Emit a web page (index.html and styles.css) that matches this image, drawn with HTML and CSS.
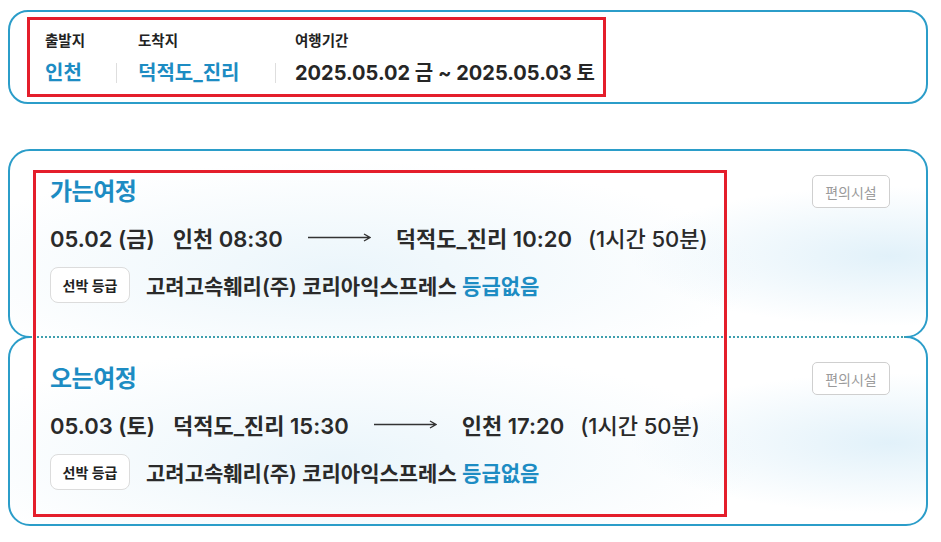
FILE: index.html
```html
<!DOCTYPE html>
<html lang="ko">
<head>
<meta charset="utf-8">
<title>여정 정보</title>
<link rel="stylesheet" href="styles.css">
</head>
<body>
<div class="page">
  <section class="route-card">
    <div class="route">
      <div class="field f1">
        <span class="label">출발지</span>
        <span class="value blue">인천</span>
      </div>
      <span class="sep"></span>
      <div class="field f2">
        <span class="label">도착지</span>
        <span class="value blue">덕적도_진리</span>
      </div>
      <span class="sep"></span>
      <div class="field f3">
        <span class="label">여행기간</span>
        <span class="value">2025.05.02 금 ~ 2025.05.03 토</span>
      </div>
    </div>
  </section>

  <div class="tickets">
    <section class="ticket first">
      <div class="ticket-head">
        <h2 class="title">가는여정</h2>
        <button class="facility">편의시설</button>
      </div>
      <div class="sched">
        <span class="date">05.02 (금)</span>
        <span class="dep">인천 08:30</span>
        <svg class="arrow" width="63" height="10" viewBox="0 0 63 10"><path d="M0 5.5H62M56 2L62 5.5L56 9" fill="none" stroke="#333" stroke-width="1.4"/></svg>
        <span class="arr">덕적도_진리 10:20</span>
        <span class="dur">(1시간 50분)</span>
      </div>
      <div class="ship">
        <span class="badge">선박 등급</span>
        <span class="company">고려고속훼리(주) 코리아익스프레스 <em>등급없음</em></span>
      </div>
    </section>
    <section class="ticket second">
      <div class="ticket-head">
        <h2 class="title">오는여정</h2>
        <button class="facility">편의시설</button>
      </div>
      <div class="sched">
        <span class="date">05.03 (토)</span>
        <span class="dep">덕적도_진리 15:30</span>
        <svg class="arrow" width="63" height="10" viewBox="0 0 63 10"><path d="M0 5.5H62M56 2L62 5.5L56 9" fill="none" stroke="#333" stroke-width="1.4"/></svg>
        <span class="arr">인천 17:20</span>
        <span class="dur">(1시간 50분)</span>
      </div>
      <div class="ship">
        <span class="badge">선박 등급</span>
        <span class="company">고려고속훼리(주) 코리아익스프레스 <em>등급없음</em></span>
      </div>
    </section>
  </div>

  <div class="mark mark-top"></div>
  <div class="mark mark-bottom"></div>
</div>
</body>
</html>
```

FILE: styles.css
```css
* { box-sizing: border-box; }
html, body { margin: 0; padding: 0; background: #fff; }
body {
  font-family: Inter, "Noto Sans CJK KR", sans-serif;
  color: #262626;
  width: 941px;
  height: 542px;
  overflow: hidden;
}
.page {
  position: relative;
  padding: 10px 13px 0 8px;
}

/* top route card */
.route-card {
  height: 94px;
  border: 2px solid #2b9dc9;
  border-radius: 20px;
  padding: 19px 0 0 35px;
  background: #fff;
}
.route {
  display: flex;
  align-items: flex-end;
}
.field {
  display: flex;
  flex-direction: column;
}
.f1 { width: 71px; }
.f2 { width: 158px; padding-left: 21px; }
.f3 { padding-left: 19px; }
.label {
  font-size: 14.5px;
  font-weight: 700;
  line-height: 20px;
  color: #222;
}
.value {
  font-size: 20px;
  font-weight: 700;
  line-height: 30px;
  margin-top: 7px;
  color: #262626;
  white-space: nowrap;
}
.value.blue { color: #1d8cc3; }
.sep {
  width: 1px;
  height: 20px;
  background: #dedede;
  margin-bottom: 5px;
}

/* tickets */
.tickets {
  margin-top: 45px;
}
.ticket {
  position: relative;
  border: 2px solid #2b9dc9;
  border-radius: 22px;
  padding: 25px 36px 0 40px;
  background:
    radial-gradient(ellipse 260px 70px at 880px 105px, rgba(206,232,246,0.6), rgba(206,232,246,0) 100%),
    radial-gradient(ellipse 420px 110px at 330px 120px, rgba(215,236,247,0.5), rgba(215,236,247,0) 100%),
    #fff;
}
.ticket.first { height: 189px; }
.ticket.second { height: 190px; margin-top: -2px; }
.ticket.second::before {
  content: "";
  position: absolute;
  left: 20px;
  right: 20px;
  top: -2px;
  height: 2px;
  background: #fff;
  border-top: 2px dotted #3e9fae;
}
.ticket-head {
  display: flex;
  justify-content: space-between;
  align-items: flex-start;
}
.title {
  margin: 0;
  font-size: 24px;
  font-weight: 700;
  line-height: 32px;
  color: #1d8cc3;
  letter-spacing: -0.5px;
}
.facility {
  margin-top: -1px;
  width: 78px;
  height: 33px;
  border: 1px solid #cfcfcf;
  border-radius: 5px;
  background: #fff;
  font-family: inherit;
  font-size: 14px;
  color: #9a9a9a;
  padding: 0;
}
.sched {
  display: flex;
  align-items: center;
  margin-top: 9px;
  height: 40px;
  font-size: 22px;
  font-weight: 600;
  color: #2a2a2a;
  white-space: nowrap;
}
.dep { margin-left: 18px; }
.arrow { margin-left: 25px; }
.arr { margin-left: 25px; }
.dur { margin-left: 16px; font-weight: 500; }
.ship {
  display: flex;
  align-items: center;
  margin-top: 10px;
}
.badge {
  display: inline-flex;
  align-items: center;
  justify-content: center;
  width: 80px;
  height: 36px;
  border: 1px solid #dcdcdc;
  border-radius: 8px;
  background: #fff;
  font-size: 14px;
  font-weight: 700;
  color: #222;
}
.company {
  margin-left: 16px;
  font-size: 21px;
  font-weight: 600;
  color: #2a2a2a;
}
.company em {
  font-style: normal;
  color: #1d8cc3;
  font-weight: 700;
}

/* red annotation boxes */
.mark {
  position: absolute;
  border: 3px solid #e41e2b;
  pointer-events: none;
}
.mark-top { left: 27px; top: 17px; width: 579px; height: 80px; }
.mark-bottom { left: 33px; top: 170px; width: 694px; height: 347px; }
```
